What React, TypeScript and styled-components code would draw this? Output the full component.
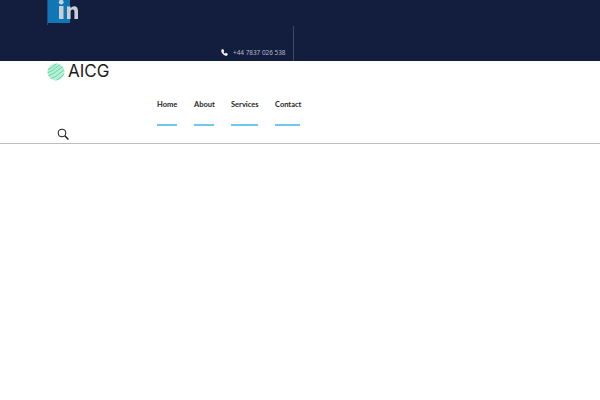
import React from "react";
import styled, { createGlobalStyle } from "styled-components";

const Global = createGlobalStyle`
  html, body { margin: 0; padding: 0; background: #fff; }
  body { font-family: "Lato", "Open Sans", sans-serif; overflow: hidden; }
`;

const TopBar = styled.div`
  height: 61px;
  background: #131e3e;
  display: flex;
  flex-direction: column;
  justify-content: space-between;
  padding-left: 47px;
  box-sizing: border-box;
`;
const SocialLink = styled.a`
  display: block;
  width: 32px;
  height: 26px;
  line-height: 0;
`;
const ContactRow = styled.div`
  display: flex;
  align-items: flex-end;
  height: 35px;
  margin-left: 174px;
`;
const PhoneIcon = styled.svg`
  width: 7px;
  height: 7px;
  margin-right: 5px;
  margin-bottom: 5px;
`;
const PhoneText = styled.span`
  font-family: "Noto Sans", sans-serif;
  font-size: 6.4px;
  line-height: 9px;
  color: #b4b8c4;
  width: 52px;
  margin-bottom: 4px;
  white-space: nowrap;
`;
const Divider = styled.div`
  width: 1px;
  height: 35px;
  background: #3f4864;
  margin-left: 8px;
`;
const Header = styled.header`
  height: 83px;
  box-sizing: border-box;
  border-bottom: 1px solid #bdbdbd;
  padding-left: 47px;
  display: flex;
  flex-direction: column;
`;
const Logo = styled.div`
  display: flex;
  align-items: center;
  gap: 3px;
  height: 19px;
  margin-top: 1px;
`;
const LogoText = styled.span`
  font-family: "Inter", sans-serif;
  font-size: 17px;
  font-weight: 400;
  color: #1c1c1c;
  letter-spacing: 0;
  line-height: 19px;
`;
const Nav = styled.nav`
  display: flex;
  gap: 17px;
  margin-left: 110px;
  margin-top: 17px;
`;
const NavItem = styled.a<{ $w: number }>`
  width: ${(p) => p.$w}px;
  height: 28px;
  box-sizing: border-box;
  border-bottom: 2px solid #6fc7ec;
  font-size: 7.5px;
  font-weight: 700;
  color: #1f1f1f;
  line-height: 13px;
  text-decoration: none;
  white-space: nowrap;
  text-align: center;
`;
const SearchBox = styled.div`
  margin-left: 10px;
  margin-top: 2px;
  height: 12px;
  line-height: 0;
`;

const GlobeLogo = () => (
  <svg width="18" height="18" viewBox="0 0 18 18">
    <defs>
      <clipPath id="g"><circle cx="9" cy="9" r="8.5" /></clipPath>
    </defs>
    <circle cx="9" cy="9" r="8.5" fill="#b9f0cf" />
    <g clipPath="url(#g)" fill="none" stroke="#3fcfa8" strokeWidth="0.8">
      <path d="M0 7 Q5 5 8 2 T14 -2" />
      <path d="M0 10 Q6 8 10 4 T18 0" stroke="#4cc4cf" />
      <path d="M1 13 Q7 11 11 7 T20 3" />
      <path d="M3 16 Q9 14 13 10 T21 6" stroke="#4cc4cf" />
      <path d="M6 19 Q11 17 15 13 T22 9" />
    </g>
  </svg>
);

export default function App() {
  return (
    <>
      <Global />
      <TopBar>
        <SocialLink href="#">
          <svg width="32" height="26" viewBox="0 0 32 26">
            <rect x="1" y="0" width="22" height="23" fill="#0f77b5" />
            <rect x="0" y="0" width="1" height="25" fill="#2a4a73" />
            <rect x="12" y="6" width="4.5" height="13" fill="#c9ced4" />
            <circle cx="14.2" cy="2.2" r="2.4" fill="#c9ced4" />
            <path d="M20 6.5h3.6v1.8c.9-1.4 2.1-2.1 3.6-2.1 2.7 0 3.8 1.9 3.8 5V19h-3.6v-7.2c0-1.6-.6-2.4-1.8-2.4-1.3 0-2 1-2 2.5V19h-3.6z" fill="#c9ced4" />
          </svg>
        </SocialLink>
        <ContactRow>
          <PhoneIcon viewBox="0 0 24 24">
            <path d="M5 1l4 1 2 6-3 2c1 3 3 5 6 6l2-3 6 2 1 4c0 2-2 4-4 4C10 23 1 14 1 5c0-2 2-4 4-4z" fill="#fff" />
          </PhoneIcon>
          <PhoneText>+44 7837 026 538</PhoneText>
          <Divider />
        </ContactRow>
      </TopBar>
      <Header>
        <Logo>
          <GlobeLogo />
          <LogoText>AICG</LogoText>
        </Logo>
        <Nav>
          <NavItem $w={20} href="#">Home</NavItem>
          <NavItem $w={20} href="#">About</NavItem>
          <NavItem $w={27} href="#">Services</NavItem>
          <NavItem $w={25} href="#">Contact</NavItem>
        </Nav>
        <SearchBox>
          <svg width="12" height="12" viewBox="0 0 12 12" fill="none" stroke="#1a1a1a">
            <circle cx="5" cy="5" r="3.9" strokeWidth="1" />
            <path d="M8 8l3.4 3.4" strokeWidth="1.4" />
          </svg>
        </SearchBox>
      </Header>
    </>
  );
}
